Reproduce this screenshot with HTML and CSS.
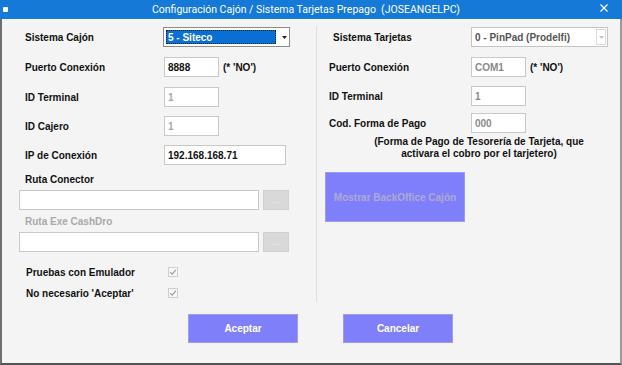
FILE: index.html
```html
<!DOCTYPE html>
<html lang="es">
<head>
<meta charset="utf-8">
<title>Configuración Cajón / Sistema Tarjetas Prepago</title>
<link rel="stylesheet" href="styles.css">
</head>
<body>
<div class="window">
  <div class="titlebar">
    <span class="app-icon"></span>
    <span class="title">Configuración Cajón / Sistema Tarjetas Prepago&nbsp; (JOSEANGELPC)</span>
    <svg class="close" width="8" height="8" viewBox="0 0 8 8"><path d="M0.5 0.5 L7.5 7.5 M7.5 0.5 L0.5 7.5" stroke="#fff" stroke-width="1.3" fill="none"/></svg>
  </div>
  <div class="body">
    <div class="columns">
      <div class="col col-left">
        <div class="row r1">
          <span class="label">Sistema Cajón</span>
          <div class="combo combo-active">
            <span class="combo-sel">5 - Siteco</span>
            <svg class="combo-arrow" width="5" height="3" viewBox="0 0 5 3"><path d="M0 0 H5 L2.5 3 Z" fill="#222"/></svg>
          </div>
        </div>
        <div class="row r2">
          <span class="label">Puerto Conexión</span>
          <div class="input w-short">8888</div>
          <span class="note">(* 'NO')</span>
        </div>
        <div class="row r3">
          <span class="label">ID Terminal</span>
          <div class="input w-short dim">1</div>
        </div>
        <div class="row r4">
          <span class="label">ID Cajero</span>
          <div class="input w-short dim">1</div>
        </div>
        <div class="row r5">
          <span class="label">IP de Conexión</span>
          <div class="input w-ip">192.168.168.71</div>
        </div>
        <div class="sub-label sl1">Ruta Conector</div>
        <div class="path-row pr1">
          <div class="input w-path"></div>
          <div class="browse">...</div>
        </div>
        <div class="sub-label sl2 disabled">Ruta Exe CashDro</div>
        <div class="path-row pr2">
          <div class="input w-path"></div>
          <div class="browse">...</div>
        </div>
        <div class="check-row cr1">
          <span class="label">Pruebas con Emulador</span>
          <span class="checkbox"><svg width="8" height="8" viewBox="0 0 8 8"><path d="M1.2 4.2 L3.2 6.2 L6.8 1.8" stroke="#9a9a9a" stroke-width="1.1" fill="none"/></svg></span>
        </div>
        <div class="check-row cr2">
          <span class="label">No necesario 'Aceptar'</span>
          <span class="checkbox"><svg width="8" height="8" viewBox="0 0 8 8"><path d="M1.2 4.2 L3.2 6.2 L6.8 1.8" stroke="#9a9a9a" stroke-width="1.1" fill="none"/></svg></span>
        </div>
      </div>
      <div class="sep"></div>
      <div class="col col-right">
        <div class="row q1">
          <span class="label label-r1">Sistema Tarjetas</span>
          <div class="combo combo-disabled">
            <span class="combo-text">0 - PinPad (Prodelfi)</span>
            <span class="combo-btn"><svg width="5" height="3" viewBox="0 0 5 3"><path d="M0 0 H5 L2.5 3 Z" fill="#c4c4c4"/></svg></span>
          </div>
        </div>
        <div class="row q2">
          <span class="label">Puerto Conexión</span>
          <div class="input w-short dim2">COM1</div>
          <span class="note">(* 'NO')</span>
        </div>
        <div class="row q3">
          <span class="label">ID Terminal</span>
          <div class="input w-short dim2">1</div>
        </div>
        <div class="row q4">
          <span class="label">Cod. Forma de Pago</span>
          <div class="input w-short dim2">000</div>
        </div>
        <div class="hint">(Forma de Pago de Tesorería de Tarjeta, que<br>activara el cobro por el tarjetero)</div>
        <div class="backoffice">Mostrar BackOffice Cajón</div>
      </div>
    </div>
    <div class="actions">
      <div class="btn">Aceptar</div>
      <div class="btn">Cancelar</div>
    </div>
  </div>
</div>
</body>
</html>
```

FILE: styles.css
```css
* { box-sizing: border-box; }
html, body { margin: 0; padding: 0; }
body {
  width: 622px;
  height: 365px;
  overflow: hidden;
  background: #f4f4f4;
  font-family: "Liberation Sans", Arial, sans-serif;
}
.window {
  width: 622px;
  height: 365px;
  display: flex;
  flex-direction: column;
  background: #f4f4f4;
}
.titlebar {
  height: 19px;
  background: #1479d7;
  display: flex;
  align-items: center;
  padding: 0 0 0 3px;
}
.app-icon {
  width: 5px;
  height: 5px;
  background: #fff;
  border-radius: 1px;
  margin-top: -1px;
}
.title {
  flex: 1;
  text-align: center;
  color: #fff;
  font-family: Roboto, "Noto Sans", sans-serif;
  font-size: 10.5px;
  padding-left: 4px;
  margin-top: -1px;
}
.close {
  margin-right: 14px;
  margin-top: -3px;
}
.body {
  flex: 1;
  border-left: 2px solid #6f6f6f;
  border-right: 2px solid #9a9a9a;
  border-bottom: 2px solid #555;
  display: flex;
  flex-direction: column;
}
.columns {
  display: flex;
  height: 283px;
}
.col { display: flex; flex-direction: column; }
.col-left {
  width: 314px;
  padding: 8px 0 0 17px;
}
.sep {
  width: 1px;
  background: #dedede;
  margin-top: 7px;
}
.col-right {
  flex: 1;
  padding: 8px 0 0 12px;
}
.row {
  display: flex;
  align-items: center;
  height: 20px;
}
.label {
  font-size: 10px;
  font-weight: bold;
  color: #111;
  white-space: nowrap;
}
.col-left .row .label { width: 139px; margin-left: 6px; }
.col-right .row .label { width: 142px; }
.label-r1 { padding-left: 4px; }
.r2 { margin-top: 10px; }
.r3 { margin-top: 10px; }
.r4 { margin-top: 9px; }
.r5 { margin-top: 9px; }
.q2 { margin-top: 10px; }
.q3 { margin-top: 9px; }
.q4 { margin-top: 7px; }

.input {
  height: 20px;
  background: #fff;
  border: 1px solid #c9c9c9;
  font-size: 10px;
  font-weight: bold;
  color: #111;
  padding: 0 0 0 3px;
  display: flex;
  align-items: center;
}
.w-short { width: 55px; }
.w-ip { width: 122px; }
.w-path { width: 240px; }
.dim { color: #a8a8a8; }
.dim2 { color: #8a8a8a; }
.note {
  font-size: 10px;
  font-weight: bold;
  color: #111;
  margin-left: 4px;
}

.combo {
  height: 20px;
  display: flex;
  align-items: center;
  background: #fff;
}
.combo-active {
  width: 127px;
  margin-left: -1px;
  border: 1px solid #8c8c8c;
  padding: 2px;
}
.combo-sel {
  width: 111px;
  height: 14px;
  background: #0a6fd4;
  border: 1px dotted #123;
  color: #fff;
  font-size: 10px;
  font-weight: bold;
  padding-left: 1px;
  display: flex;
  align-items: center;
}
.combo-arrow { margin-left: 6px; }
.combo-disabled {
  width: 137px;
  border: 1px solid #c4c4c4;
  padding-left: 3px;
  justify-content: space-between;
}
.combo-text {
  font-size: 10px;
  font-weight: bold;
  color: #555;
}
.combo-btn {
  width: 10px;
  height: 16px;
  margin-right: 1px;
  border: 1px solid #dcdcdc;
  display: flex;
  align-items: center;
  justify-content: center;
}

.sub-label {
  font-size: 10px;
  font-weight: bold;
  color: #111;
  height: 14px;
  line-height: 14px;
  margin-left: 6px;
}
.sub-label.disabled { color: #a9a9a9; }
.sl1 { margin-top: 8px; }
.sl2 { margin-top: 5px; }
.path-row {
  display: flex;
  align-items: center;
  gap: 4px;
  margin-top: 3px;
}
.browse {
  width: 26px;
  height: 20px;
  background: #d9d9d9;
  border: 1px solid #d0d0d0;
  color: #f2f2f2;
  font-size: 9px;
  display: flex;
  align-items: center;
  justify-content: center;
  padding-bottom: 1px;
}
.check-row {
  display: flex;
  align-items: center;
  height: 14px;
}
.check-row .label { width: 142px; margin-left: 7px; }
.cr1 { margin-top: 13px; }
.cr2 { margin-top: 7px; }
.checkbox {
  width: 10px;
  height: 10px;
  border: 1px solid #cfcfcf;
  background: #f7f7f7;
  display: flex;
  align-items: center;
  justify-content: center;
}

.hint {
  margin-top: 3px;
  margin-left: 9px;
  text-align: center;
  font-size: 10px;
  font-weight: bold;
  line-height: 12px;
  color: #111;
}
.backoffice {
  margin-top: 12px;
  margin-left: -4px;
  width: 140px;
  height: 50px;
  background: #7f7ffc;
  border: 1px solid #9b9bf5;
  color: #ababcf;
  font-size: 10px;
  font-weight: bold;
  display: flex;
  align-items: center;
  justify-content: center;
}

.actions {
  display: flex;
  gap: 45px;
  padding: 12px 0 0 186px;
}
.btn {
  width: 110px;
  height: 29px;
  background: #7f7ffa;
  border: 1px solid #9d9df0;
  color: #fff;
  font-size: 10px;
  font-weight: bold;
  display: flex;
  align-items: center;
  justify-content: center;
}
```
